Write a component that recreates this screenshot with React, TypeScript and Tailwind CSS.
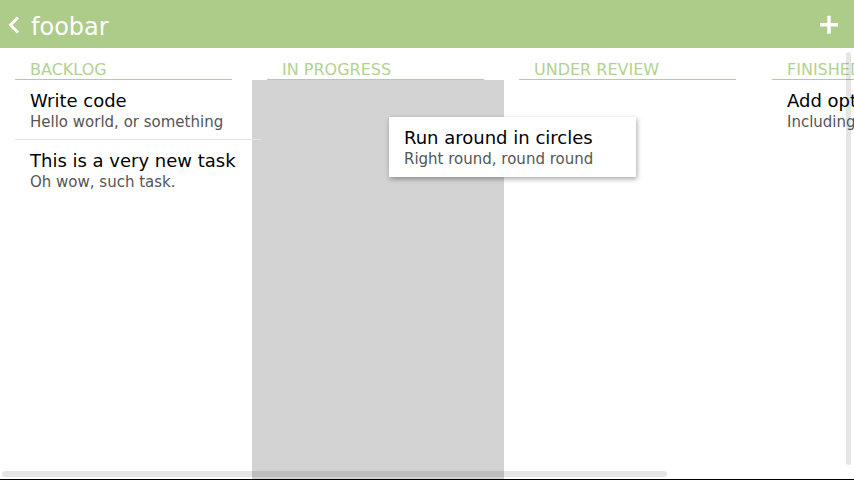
import React from "react";

type Task = { title: string; desc: string };

const columns: { name: string; tasks: Task[]; placeholder?: boolean }[] = [
	{
		name: "BACKLOG",
		tasks: [
			{ title: "Write code", desc: "Hello world, or something" },
			{ title: "This is a very new task", desc: "Oh wow, such task." },
		],
	},
	{ name: "IN PROGRESS", tasks: [], placeholder: true },
	{ name: "UNDER REVIEW", tasks: [] },
	{
		name: "FINISHED",
		tasks: [{ title: "Add optional extras", desc: "Including the fun ones" }],
	},
];

const Card: React.FC<{ task: Task; divider?: boolean }> = ({ task, divider }) => (
	<div className={`relative z-10 w-[247px] ml-[15px] pl-[15px] pt-[11px] pb-[7px] ${divider ? "border-b border-[#e2e2e2]" : "border-b border-transparent"}`}>
		<div className="text-[18px] leading-[20px] text-black whitespace-nowrap">{task.title}</div>
		<div className="mt-px text-[15px] leading-[20px] text-[#555555] whitespace-nowrap">{task.desc}</div>
	</div>
);

const App: React.FC = () => {
	return (
		<div className="relative h-[480px] w-[854px] overflow-hidden bg-white flex flex-col font-['DejaVu_Sans',sans-serif]">
			<header className="h-12 shrink-0 bg-[#adcb89] flex items-start justify-between">
				<div className="flex items-start">
					<svg width="24" height="48" viewBox="0 0 24 48" className="ml-[2px]">
						<polyline points="16,17.5 8.5,25 16,32.5" fill="none" stroke="white" strokeWidth="3" />
					</svg>
					<span className="ml-[5px] pt-[13px] text-[24px] leading-[28px] text-white">foobar</span>
				</div>
				<svg width="20" height="20" viewBox="0 0 20 20" className="mt-[15px] mr-[15px]">
					<rect x="1" y="8" width="18" height="3.5" fill="white" />
					<rect x="8.25" y="0.75" width="3.5" height="18" fill="white" />
				</svg>
			</header>

			<div className="flex-1 flex min-h-0 overflow-hidden">
				{columns.map((col, ci) => (
					<section key={col.name} className={`w-[252px] shrink-0 flex flex-col ${ci === 3 ? "ml-px" : ""}`}>
						<div className="ml-[15px] mr-[20px] h-[32px] pt-[13px] pl-[15px] border-b border-[#b3cf93] text-[16px] leading-[18px] text-[#b3d191] whitespace-nowrap">
							{col.name}
						</div>
						{col.placeholder ? (
							<div className="flex-1 bg-[#d3d3d3]" />
						) : (
							<div>
								{col.tasks.map((t, i) => (
									<Card key={t.title} task={t} divider={i < col.tasks.length - 1} />
								))}
							</div>
						)}
					</section>
				))}
			</div>
			<div className="h-px shrink-0 bg-black" />

			{/* card being dragged */}
			<div className="absolute left-[389px] top-[117px] w-[247px] h-[60px] bg-white pl-[15px] pt-[11px] shadow-[1px_2px_5px_rgba(0,0,0,0.35)]">
				<div className="text-[18px] leading-[20px] text-black whitespace-nowrap">Run around in circles</div>
				<div className="mt-px text-[15px] leading-[20px] text-[#555555] whitespace-nowrap">Right round, round round</div>
			</div>

			{/* overlay scrollbars */}
			<div className="absolute left-[846px] top-[52px] w-[5px] h-[413px] rounded-full bg-black/10" />
			<div className="absolute left-[2px] top-[471px] w-[665px] h-[6px] rounded-full bg-black/10" />
		</div>
	);
};

export default App;
